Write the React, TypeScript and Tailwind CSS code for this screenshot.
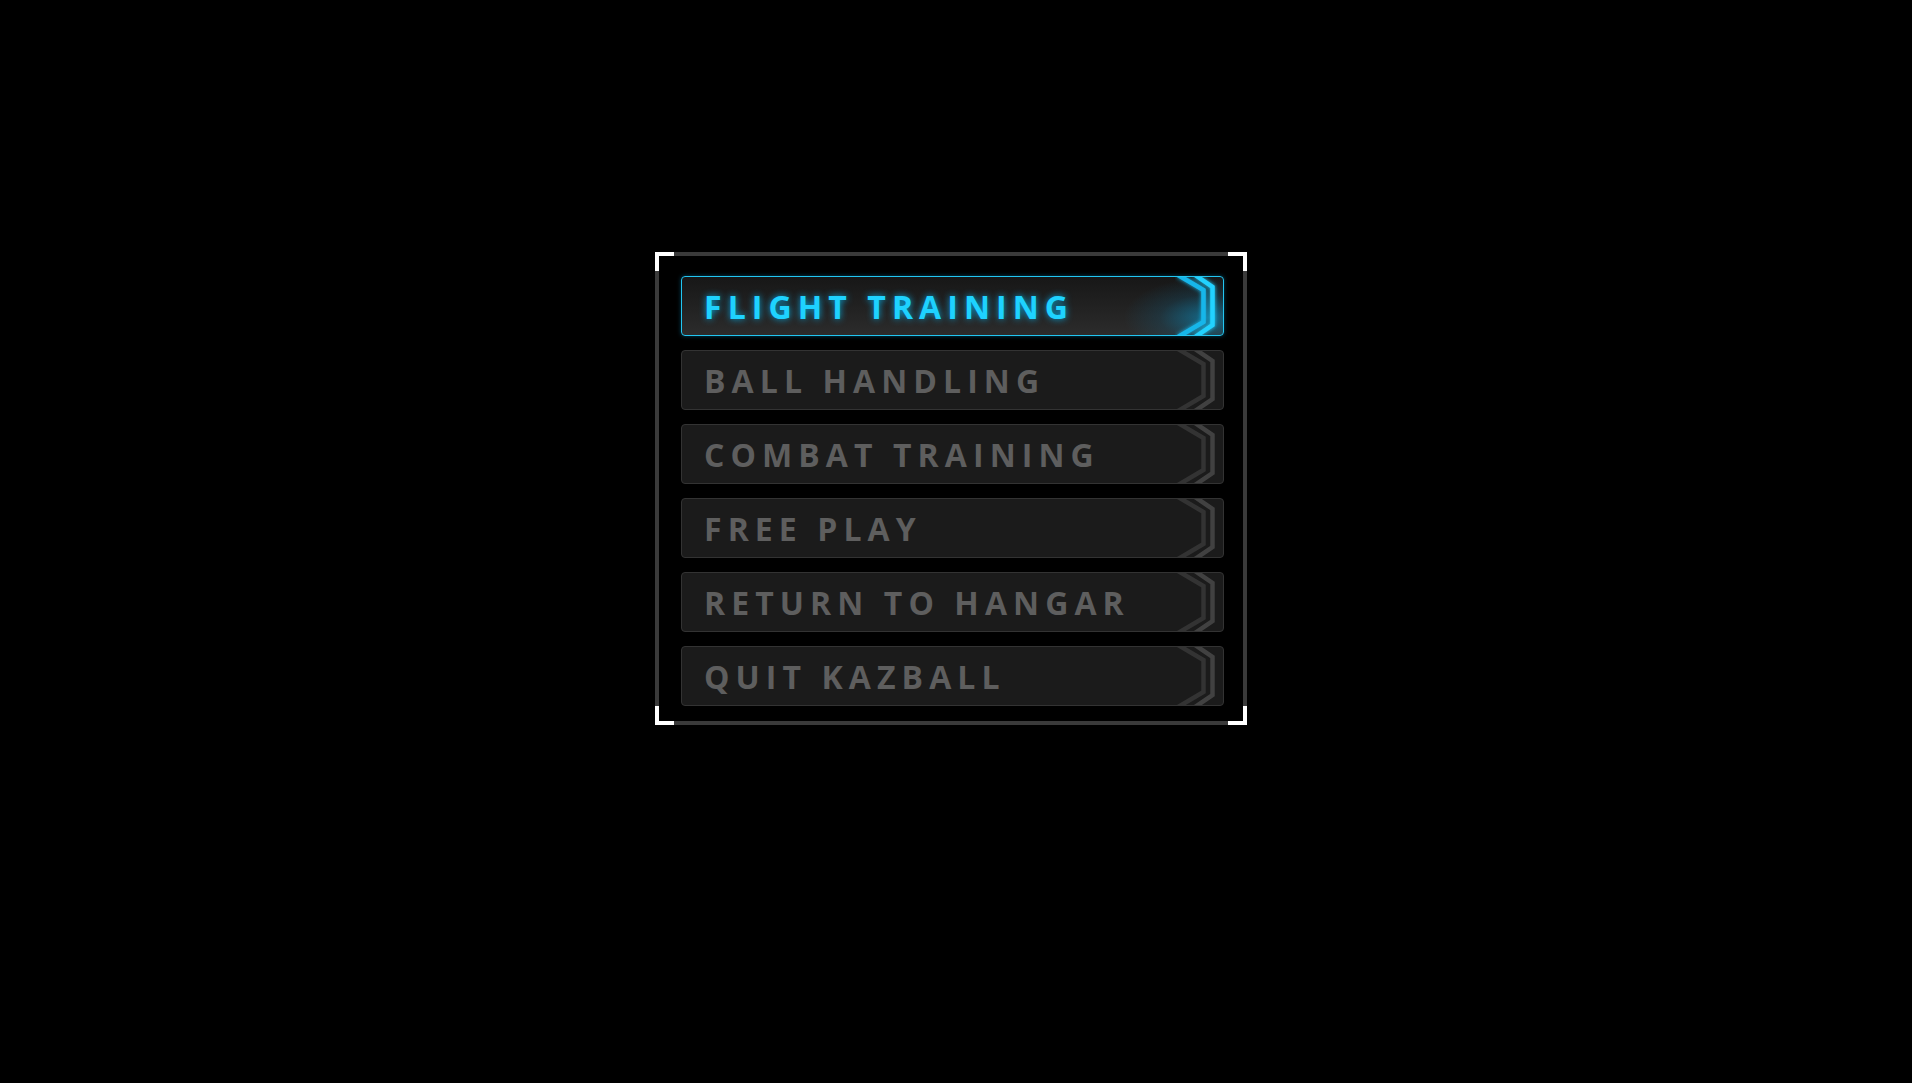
import React from 'react';

const items = [
  'FLIGHT TRAINING',
  'BALL HANDLING',
  'COMBAT TRAINING',
  'FREE PLAY',
  'RETURN TO HANGAR',
  'QUIT KAZBALL',
];

const Chevrons: React.FC<{ active: boolean }> = ({ active }) => (
  <svg
    className="absolute right-0 top-0 h-full w-[48px]"
    viewBox="0 0 48 58"
    preserveAspectRatio="none"
  >
    {active && (
      <defs>
        <filter id="glow" x="-50%" y="-50%" width="200%" height="200%">
          <feGaussianBlur stdDeviation="2" result="b" />
          <feMerge>
            <feMergeNode in="b" />
            <feMergeNode in="SourceGraphic" />
          </feMerge>
        </filter>
      </defs>
    )}
    <g filter={active ? 'url(#glow)' : undefined} fill="none" strokeWidth="4.5" strokeLinejoin="miter">
      <polyline points="3,-2 28.5,13 28.5,45 3,60" stroke={active ? '#18b6ea' : '#333333'} />
      <polyline points="20,-2 37.5,10 37.5,48 20,60" stroke={active ? '#22d2ff' : '#414141'} />
    </g>
  </svg>
);

const MenuButton: React.FC<{ label: string; active?: boolean }> = ({ label, active = false }) => {
  return (
    <div
      className={
        active
          ? 'relative h-[60px] w-[543px] overflow-hidden rounded-[4px] border border-[#22c6f2] bg-linear-to-b from-[#171717] to-[#2c2c2c] shadow-[0_0_4px_rgba(0,190,255,0.35)]'
          : 'relative h-[60px] w-[543px] overflow-hidden rounded-[4px] border border-[#333333] bg-[#1b1b1b]'
      }
    >
      {active && (
        <div className="absolute right-0 top-0 h-full w-[100px] bg-[radial-gradient(ellipse_at_85%_70%,rgba(0,185,255,0.45)_0%,rgba(0,160,230,0.12)_40%,transparent_70%)]" />
      )}
      <Chevrons active={active} />
      <div className="relative flex h-full items-center pl-[22px] pt-[1px]">
        <span
          className={
            active
              ? 'text-[32px] font-bold tracking-[0.19em] text-[#1ed2ff] [text-shadow:0_0_7px_rgba(0,190,255,0.85)]'
              : 'text-[32px] font-bold tracking-[0.19em] text-[#5e5e5e]'
          }
          style={{ fontFamily: '"Open Sans", sans-serif' }}
        >
          {label}
        </span>
      </div>
    </div>
  );
};

const Corner: React.FC<{ pos: string }> = ({ pos }) => (
  <div className={`absolute h-[19px] w-[19px] border-white ${pos}`} />
);

export default function App() {
  return (
    <div className="min-h-screen w-full bg-black">
      <div className="flex justify-center pt-[252px] pr-[10px]">
        <div className="relative border-4 border-[#3a3a3a] pl-[22px] pr-[19px] pt-[20px] pb-[15px]">
          <Corner pos="-left-[4px] -top-[4px] border-l-4 border-t-4" />
          <Corner pos="-right-[4px] -top-[4px] border-r-4 border-t-4" />
          <Corner pos="-left-[4px] -bottom-[4px] border-l-4 border-b-4" />
          <Corner pos="-right-[4px] -bottom-[4px] border-r-4 border-b-4" />
          <div className="flex flex-col gap-[14px]">
            {items.map((label, i) => (
              <MenuButton key={label} label={label} active={i === 0} />
            ))}
          </div>
        </div>
      </div>
    </div>
  );
}
